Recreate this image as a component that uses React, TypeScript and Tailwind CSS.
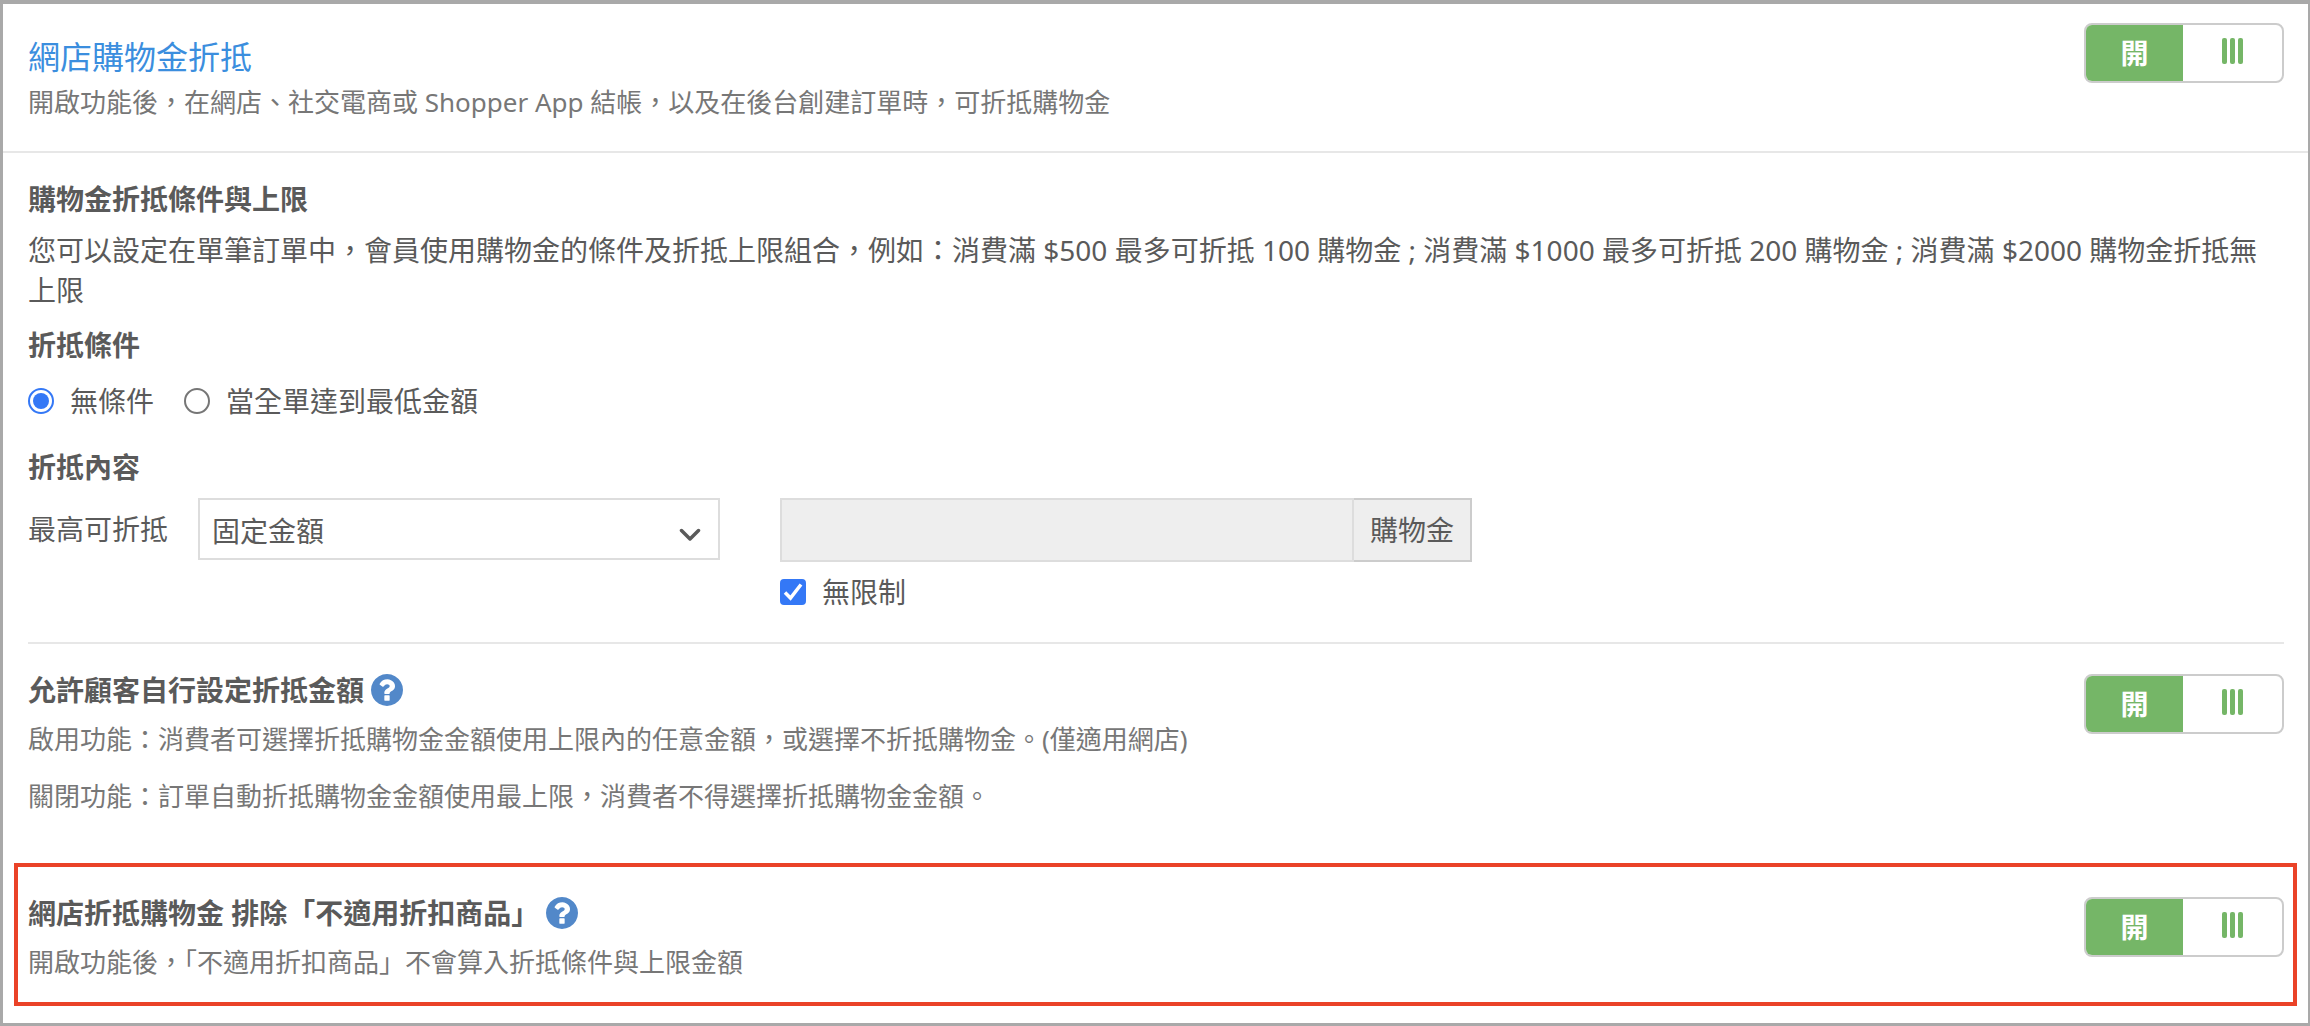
import React, { useState } from "react";

interface ToggleProps {
  label: string;
  checked: boolean;
  onChange: (checked: boolean) => void;
}

// on / off switch, the handle with the three bars sits on the opposite side of the label
function Toggle({ label, checked, onChange }: ToggleProps) {
  return (
    <button
      type="button"
      role="switch"
      aria-checked={checked}
      aria-label={label}
      onClick={() => onChange(!checked)}
      className={`flex h-[60px] w-[200px] shrink-0 overflow-hidden rounded-lg border-2 border-[#cccccc] bg-white ${
        checked ? "flex-row" : "flex-row-reverse"
      }`}
    >
      <span
        className={`flex h-full w-[97px] items-center justify-center text-[28px] font-bold text-white ${
          checked ? "bg-[#75b667]" : "bg-[#999999]"
        }`}
      >
        {checked ? "開" : "關"}
      </span>
      <span className="flex h-full flex-1 justify-center gap-[3px] pt-[13px]">
        <span className="h-[26px] w-[5px] rounded-xs bg-[#75b667]" />
        <span className="h-[26px] w-[5px] rounded-xs bg-[#75b667]" />
        <span className="h-[26px] w-[5px] rounded-xs bg-[#75b667]" />
      </span>
    </button>
  );
}

// round blue help icon next to a heading
function HelpIcon() {
  return (
    <button type="button" aria-label="說明" className="shrink-0">
      <svg viewBox="0 0 1536 1536" className="size-8" fill="#5288c9">
        <path d="M896 1248v-192q0-14-9-23t-23-9H672q-14 0-23 9t-9 23v192q0 14 9 23t23 9h192q14 0 23-9t9-23zm256-672q0-88-55.500-163T958 297t-170-41q-243 0-371 213-15 24 8 42l132 100q7 6 19 6 16 0 25-12 53-68 86-92 34-24 86-24 48 0 85.500 26t37.500 59q0 38-20 61t-68 45q-63 28-115.500 86.500T640 892v36q0 14 9 23t23 9h192q14 0 23-9t9-23q0-19 21.500-49.500T972 829q32-18 49-28.500t46-35 44.500-48 28-60.500 12.500-81zm384 192q0 209-103 385.500T1153.500 1433 768 1536t-385.500-103T103 1153.500 0 768t103-385.500T382.500 103 768 0t385.500 103T1433 382.500 1536 768z" />
      </svg>
    </button>
  );
}

interface RadioProps {
  label: string;
  checked: boolean;
  onChange: () => void;
}

function Radio({ label, checked, onChange }: RadioProps) {
  return (
    <label className="flex items-center gap-4">
      <input
        type="radio"
        name="condition"
        checked={checked}
        onChange={onChange}
        className="size-[26px] appearance-none rounded-full border-2 border-[#767676] bg-clip-content p-[3px] checked:border-[#3478f6] checked:bg-[#3478f6]"
      />
      {label}
    </label>
  );
}

function App() {
  const [redeem, setRedeem] = useState(true);
  const [custom, setCustom] = useState(true);
  const [exclude, setExclude] = useState(true);
  const [condition, setCondition] = useState<"none" | "minimum">("none");
  const [unlimited, setUnlimited] = useState(true);
  const [amount, setAmount] = useState("");

  return (
    <div
      lang="zh-Hant"
      className="min-h-screen border-t-4 border-r-2 border-b-3 border-l-3 border-[#a9a9a9] bg-white pb-4 font-['Noto_Sans','Noto_Sans_CJK_TC',sans-serif] text-[28px] leading-[40px] text-[#5a5a5a]"
    >
      {/* header */}
      <header className="flex items-start justify-between border-b-2 border-[#e7e7e7] pt-[19px] pr-6 pb-7 pl-[25px]">
        <div className="pt-[10px]">
          <h1 className="text-[32px] leading-[48px] text-[#3b8ede]">
            網店購物金折抵
          </h1>
          <p className="text-[26px] leading-[42px] text-[#777777]">
            開啟功能後，在網店、社交電商或 Shopper App
            結帳，以及在後台創建訂單時，可折抵購物金
          </p>
        </div>
        <Toggle label="網店購物金折抵" checked={redeem} onChange={setRedeem} />
      </header>

      {/* conditions and limits */}
      <section className="mr-6 ml-[25px] border-b-2 border-[#e7e7e7] pt-[26px] pb-[30px]">
        <h2 className="font-bold">購物金折抵條件與上限</h2>
        <p className="mt-[11px]">
          您可以設定在單筆訂單中，會員使用購物金的條件及折抵上限組合，例如：消費滿
          $500 最多可折抵 100 購物金 ; 消費滿 $1000 最多可折抵 200 購物金 ;
          消費滿 $2000 購物金折抵無上限
        </p>

        <h3 className="mt-[15px] font-bold">折抵條件</h3>
        <div className="mt-4 flex gap-[30px]">
          <Radio
            label="無條件"
            checked={condition === "none"}
            onChange={() => setCondition("none")}
          />
          <Radio
            label="當全單達到最低金額"
            checked={condition === "minimum"}
            onChange={() => setCondition("minimum")}
          />
        </div>

        <h3 className="mt-[26px] font-bold">折抵內容</h3>
        <div className="mt-[11px] flex items-start">
          <label htmlFor="discount-type" className="mr-[30px] shrink-0 pt-[11px]">
            最高可折抵
          </label>
          <div className="relative mr-[60px] w-full max-w-[522px]">
            <select
              id="discount-type"
              className="h-[62px] w-full appearance-none border-2 border-[#dddddd] bg-white px-3 pt-1"
            >
              <option>固定金額</option>
              <option>百分比</option>
            </select>
            <svg
              viewBox="0 0 22 13"
              className="pointer-events-none absolute top-[30px] right-[19px] h-[13px] w-[22px]"
              fill="none"
              stroke="#5a5a5a"
              strokeWidth="3.500"
              strokeLinecap="round"
              strokeLinejoin="round"
            >
              <path d="M2.500 2.500l8.500 8.500 8.500-8.500" />
            </svg>
          </div>
          <div className="w-full max-w-[692px]">
            <div className="flex h-16">
              <input
                type="text"
                aria-label="購物金"
                value={amount}
                disabled={unlimited}
                onChange={(e) => setAmount(e.target.value)}
                className="min-w-0 flex-1 border-2 border-[#dddddd] px-3 disabled:bg-[#eeeeee]"
              />
              <span className="flex shrink-0 items-center border-2 border-l-0 border-[#cccccc] bg-[#eeeeee] px-4">
                購物金
              </span>
            </div>
            <label className="mt-[10px] flex w-fit items-center gap-4">
              <span className="relative flex">
                <input
                  type="checkbox"
                  checked={unlimited}
                  onChange={(e) => setUnlimited(e.target.checked)}
                  className="peer size-[26px] appearance-none rounded-sm border-2 border-[#767676] checked:border-[#3478f6] checked:bg-[#3478f6]"
                />
                <svg
                  viewBox="0 0 26 26"
                  className="pointer-events-none absolute inset-0 hidden peer-checked:block"
                  fill="none"
                  stroke="#ffffff"
                  strokeWidth="3.500"
                >
                  <path d="M5 13.500l5.500 5.500L21 5.500" />
                </svg>
              </span>
              無限制
            </label>
          </div>
        </div>
      </section>

      {/* customer defined amount */}
      <section className="mr-6 ml-[25px] flex items-start justify-between">
        <div className="pt-[26px]">
          <h2 className="flex items-center gap-[7px] font-bold">
            允許顧客自行設定折抵金額
            <HelpIcon />
          </h2>
          <p className="mt-[9px] text-[26px] text-[#777777]">
            啟用功能：消費者可選擇折抵購物金金額使用上限內的任意金額，或選擇不折抵購物金。(僅適用網店)
          </p>
          <p className="mt-[17px] text-[26px] text-[#777777]">
            關閉功能：訂單自動折抵購物金金額使用最上限，消費者不得選擇折抵購物金金額。
          </p>
        </div>
        <div className="pt-[30px]">
          <Toggle
            label="允許顧客自行設定折抵金額"
            checked={custom}
            onChange={setCustom}
          />
        </div>
      </section>

      {/* excluded products */}
      <section className="mt-[47px] mr-[11px] ml-[11px] flex items-start justify-between border-4 border-[#ea4228] pr-[9px] pb-5 pl-[10px]">
        <div className="pt-[26px]">
          <h2 className="flex items-center gap-[7px] font-bold">
            網店折抵購物金 排除「不適用折扣商品」
            <HelpIcon />
          </h2>
          <p className="mt-[9px] text-[26px] text-[#777777]">
            開啟功能後，「不適用折扣商品」不會算入折抵條件與上限金額
          </p>
        </div>
        <div className="pt-[30px]">
          <Toggle
            label="網店折抵購物金 排除「不適用折扣商品」"
            checked={exclude}
            onChange={setExclude}
          />
        </div>
      </section>
    </div>
  );
}

export default App;
